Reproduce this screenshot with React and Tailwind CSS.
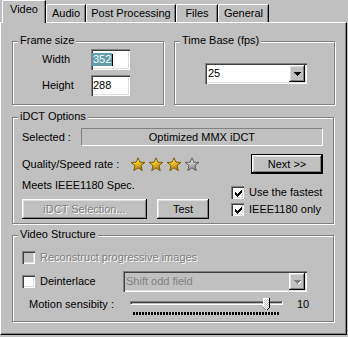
const sunken =
  "shadow-[inset_1px_1px_0_#808080,inset_2px_2px_0_#404040,inset_-1px_-1px_0_#ffffff,inset_-2px_-2px_0_#dfdfdf]";
const raised =
  "shadow-[inset_-1px_-1px_0_#000000,inset_1px_1px_0_#ffffff,inset_-2px_-2px_0_#808080,inset_2px_2px_0_#dfdfdf]";
const grayText = "text-[#808080] [text-shadow:1px_1px_0_#ffffff]";

function Tab({ label, w, active }) {
  if (active) {
    return (
      <div
        className={`relative z-10 -mb-px flex h-[23px] ${w} justify-center rounded-tl-[2px] border-l border-t border-r border-l-white border-t-white border-r-black bg-[#c0c0c0] pt-[2px] shadow-[inset_-1px_0_0_#808080]`}
      >
        {label}
      </div>
    );
  }
  return (
    <div
      className={`flex h-[18px] ${w} justify-center rounded-tl-[2px] border-l border-t border-r border-l-white border-t-white border-r-black pt-[2px] shadow-[inset_-1px_0_0_#808080]`}
    >
      {label}
    </div>
  );
}

function Group({ title, className = "", children }) {
  return (
    <div className={`relative border border-[#808080] shadow-[inset_1px_1px_0_#ffffff,1px_1px_0_#ffffff] ${className}`}>
      <span className="absolute -top-[8px] left-[5px] bg-[#c0c0c0] px-[2px]">{title}</span>
      {children}
    </div>
  );
}

function Arrow({ disabled }) {
  const c = disabled ? "#808080" : "#000";
  return (
    <svg width="7" height="4" viewBox="0 0 7 4" shapeRendering="crispEdges">
      {disabled && (
        <g fill="#fff">
          <rect x="1" y="1" width="7" height="1" />
          <rect x="2" y="2" width="5" height="1" />
          <rect x="3" y="3" width="3" height="1" />
          <rect x="4" y="4" width="1" height="1" />
        </g>
      )}
      <rect x="0" y="0" width="7" height="1" fill={c} />
      <rect x="1" y="1" width="5" height="1" fill={c} />
      <rect x="2" y="2" width="3" height="1" fill={c} />
      <rect x="3" y="3" width="1" height="1" fill={c} />
    </svg>
  );
}

function Combo({ value, w, disabled }) {
  return (
    <div className={`relative flex h-[21px] ${w} items-center ${disabled ? "bg-[#c0c0c0]" : "bg-white"} pl-[3px] ${sunken}`}>
      <span className={disabled ? "text-[#808080]" : ""}>{value}</span>
      <div className={`absolute right-[2px] top-[2px] flex h-[17px] w-[16px] items-center justify-center bg-[#c0c0c0] ${raised}`}>
        <Arrow disabled={disabled} />
      </div>
    </div>
  );
}

function Check({ checked, disabled }) {
  const cols = [2, 3, 4, 3, 2, 1, 0];
  return (
    <span className={`flex h-[13px] w-[13px] shrink-0 items-center justify-center ${disabled ? "bg-[#c0c0c0]" : "bg-white"} ${sunken}`}>
      {checked && (
        <svg width="7" height="7" viewBox="0 0 7 7" shapeRendering="crispEdges" className="ml-px mt-px">
          {cols.map((y, x) => (
            <rect key={x} x={x} y={y} width="1" height="3" fill="#000" />
          ))}
        </svg>
      )}
    </span>
  );
}

function Btn({ children, w, disabled, def }) {
  if (def) {
    return (
      <div className={`h-[20px] ${w} border border-black`}>
        <div className={`flex h-full w-full items-center justify-center ${raised}`}>{children}</div>
      </div>
    );
  }
  return (
    <div className={`flex h-[20px] ${w} items-center justify-center ${raised} ${disabled ? grayText : ""}`}>
      {children}
    </div>
  );
}

function Star({ on, id }) {
  return (
    <svg width="16" height="15" viewBox="0 0 16 15">
      <defs>
        <linearGradient id={id} x1="0" y1="0" x2="0.4" y2="1">
          <stop offset="0" stopColor={on ? "#fffbd0" : "#ffffff"} />
          <stop offset="0.45" stopColor={on ? "#f5cf2a" : "#cfcfcf"} />
          <stop offset="1" stopColor={on ? "#b77d08" : "#8a8a8a"} />
        </linearGradient>
      </defs>
      <polygon
        points="8,0.8 9.9,5.2 14.9,5.4 11,8.5 12.2,13.6 8,10.8 3.8,13.6 5,8.5 1.1,5.4 6.1,5.2"
        fill={`url(#${id})`}
        stroke={on ? "#7a5a0a" : "#5e5e5e"}
        strokeWidth="1"
        strokeLinejoin="round"
      />
    </svg>
  );
}

function Thumb() {
  return (
    <svg width="7" height="13" viewBox="0 0 7 13" shapeRendering="crispEdges">
      <defs>
        <pattern id="dith" width="2" height="2" patternUnits="userSpaceOnUse">
          <rect width="2" height="2" fill="#c0c0c0" />
          <rect width="1" height="1" fill="#ffffff" />
          <rect x="1" y="1" width="1" height="1" fill="#ffffff" />
        </pattern>
      </defs>
      <path d="M0 0H7V9L3.5 12.5L0 9Z" fill="url(#dith)" />
      <path d="M0.5 9.5V0.5H6" stroke="#ffffff" fill="none" />
      <path d="M6.5 0V9.5L3.5 12.5" stroke="#000000" fill="none" />
      <path d="M0.5 9.5L3.5 12.5" stroke="#808080" fill="none" />
    </svg>
  );
}

export default function App() {
  return (
    <div className="h-[337px] w-[348px] overflow-hidden bg-[#c0c0c0] font-['Liberation_Sans',Arial,sans-serif] text-[11px] leading-[13px] text-black">
      {/* tabs */}
      <div className="flex h-[22px] items-end pl-[2px]">
        <Tab label="Video" w="w-[44px]" active />
        <Tab label="Audio" w="w-[40px]" />
        <Tab label="Post Processing" w="w-[90px]" />
        <Tab label="Files" w="w-[42px]" />
        <Tab label="General" w="w-[51px]" />
      </div>

      <div className="h-[313px] w-[347px] border border-t-white border-l-white border-r-black border-b-black pl-[11px] pt-[18px] shadow-[inset_-1px_-1px_0_#808080]">
        {/* frame size / time base */}
        <div className="flex gap-[10px]">
          <Group title="Frame size" className="h-[64px] w-[152px]">
            <div className="flex flex-col gap-[5px] pl-[29px] pt-[7px]">
              <div className="flex items-center">
                <span className="w-[49px]">Width</span>
                <div className={`flex h-[21px] w-[39px] items-center bg-white pl-[1px] ${sunken}`}>
                  <span className="bg-[#5f9eaa] px-px text-white">352</span>
                  <span className="h-[12px] w-px bg-black" />
                </div>
              </div>
              <div className="flex items-center">
                <span className="w-[49px]">Height</span>
                <div className={`flex h-[21px] w-[39px] items-center bg-white pl-[2px] ${sunken}`}>288</div>
              </div>
            </div>
          </Group>
          <Group title="Time Base (fps)" className="h-[64px] w-[161px]">
            <div className="pl-[30px] pt-[21px]">
              <Combo value="25" w="w-[102px]" />
            </div>
          </Group>
        </div>

        {/* iDCT options */}
        <Group title="iDCT Options" className="mt-[12px] h-[107px] w-[322px]">
          <div className="pl-[9px] pr-[10px] pt-[10px]">
            <div className="flex items-center">
              <span className="w-[59px]">Selected :</span>
              <div className="flex h-[18px] w-[243px] items-center justify-center border border-t-[#808080] border-l-[#808080] border-b-white border-r-white">
                Optimized MMX iDCT
              </div>
            </div>
            <div className="mt-[8px] flex items-center justify-between">
              <div className="flex items-center">
                <span className="w-[108px]">Quality/Speed rate :</span>
                <div className="flex gap-[2px]">
                  <Star on id="s1" />
                  <Star on id="s2" />
                  <Star on id="s3" />
                  <Star id="s4" />
                </div>
              </div>
              <Btn w="w-[72px]" def>
                Next &gt;&gt;
              </Btn>
            </div>
            <div className="flex items-start">
              <div className="w-[187px]">
                <div className="mt-[5px]">Meets IEEE1180 Spec.</div>
                <div className="mt-[7px] flex gap-[10px]">
                  <Btn w="w-[125px]" disabled>
                    iDCT Selection...
                  </Btn>
                  <Btn w="w-[52px]">Test</Btn>
                </div>
              </div>
              <div className="ml-[22px] flex flex-col gap-[4px] pt-[12px]">
                <label className="flex items-center gap-[5px]">
                  <Check checked />
                  Use the fastest
                </label>
                <label className="flex items-center gap-[5px]">
                  <Check checked />
                  IEEE1180 only
                </label>
              </div>
            </div>
          </div>
        </Group>

        {/* video structure */}
        <Group title="Video Structure" className="mt-[11px] h-[87px] w-[322px]">
          <div className="pl-[9px] pt-[15px]">
            <label className="flex items-center gap-[5px]">
              <Check disabled />
              <span className={grayText}>Reconstruct progressive images</span>
            </label>
            <div className="mt-[7px] flex items-center">
              <label className="flex w-[101px] items-center gap-[5px]">
                <Check />
                Deinterlace
              </label>
              <Combo value="Shift odd field" w="w-[184px]" disabled />
            </div>
            <div className="mt-[5px] flex items-start pl-[7px]">
              <span className="mt-px w-[101px]">Motion sensibity :</span>
              <div className="relative h-[18px] w-[153px]">
                <div className="absolute left-0 right-0 top-[4px] h-[4px] border border-t-[#808080] border-l-[#808080] border-b-white border-r-white shadow-[inset_1px_1px_0_#404040]" />
                <div className="absolute left-[133px] top-[1px]">
                  <Thumb />
                </div>
                <div className="absolute left-[3px] top-[15px] h-[3px] w-[147px] bg-[repeating-linear-gradient(90deg,#000_0_2px,transparent_2px_3px)]" />
              </div>
              <span className="ml-[14px] mt-px">10</span>
            </div>
          </div>
        </Group>
      </div>
    </div>
  );
}
